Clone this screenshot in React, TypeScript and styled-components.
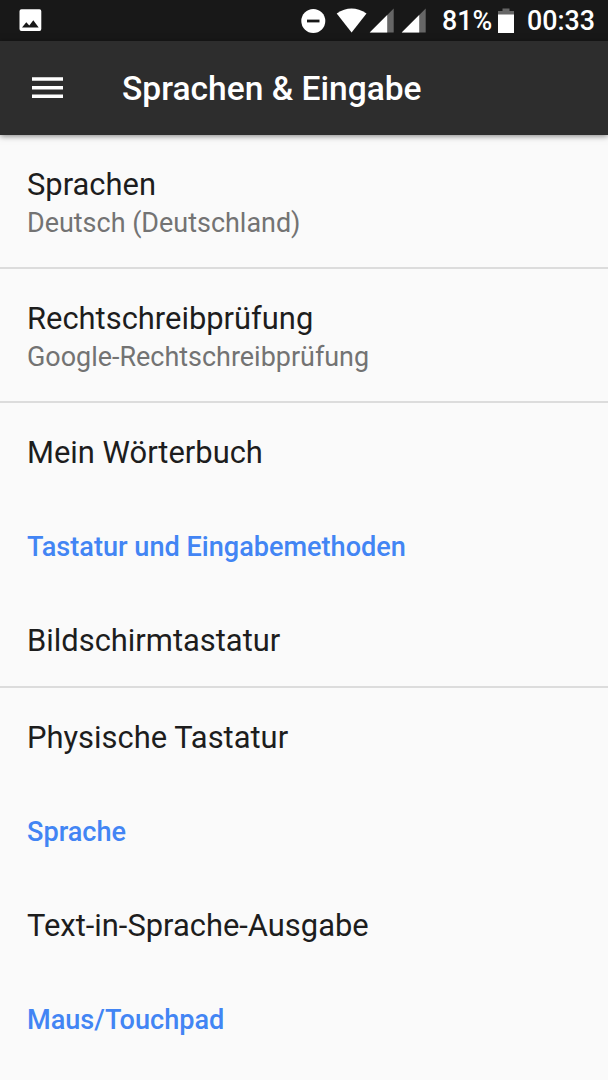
import React from 'react';
import styled, { createGlobalStyle } from 'styled-components';

const Global = createGlobalStyle`
  * { box-sizing: border-box; }
  body { margin: 0; background: #fafafa; font-family: Roboto, sans-serif; overflow: hidden; }
`;
const Screen = styled.div`
  display: flex; flex-direction: column; width: 608px; height: 1080px; overflow: hidden; background: #fafafa;
`;
const StatusBar = styled.div`
  display: flex; align-items: center; height: 41px; flex: none; background: #181818; color: #fff;
  font-size: 26.8px; font-weight: 500; line-height: 41px; padding: 0 13px 0 19px;
  svg { display: block; flex: none; }
`;
const Spacer = styled.div`flex: 1;`;
const Percent = styled.span`width: 49px; margin: 1px 7px 0 15px; white-space: nowrap;`;
const Clock = styled.span`width: 68px; margin: 1px 0 0 13px; white-space: nowrap;`;
const AppBar = styled.header`
  display: flex; align-items: center; height: 94px; flex: none; background: #2d2d2d; padding-left: 32px;
  box-shadow: 0 1px 6px rgba(0,0,0,.5); color: #fff; z-index: 1;
  svg { display: block; }
`;
const Title = styled.h1`
  margin: 2px 0 0 59px; font-size: 33.55px; font-weight: 500; line-height: 40px; white-space: nowrap;
`;
const List = styled.main`display: flex; flex-direction: column;`;
const Row = styled.div<{ $h: number; $line?: boolean; $top: number }>`
  flex: none; height: ${p => p.$h}px; padding: ${p => p.$top}px 27px 0; white-space: nowrap;
  border-bottom: ${p => (p.$line ? '2px solid #dcdcdc' : '0')};
`;
const Name = styled.div`font-size: 30.9px; line-height: 40px; color: #1d1d1d;`;
const Detail = styled.div`font-size: 26.95px; line-height: 36px; color: #737373;`;
const Heading = styled.h2`
  flex: none; margin: 0; height: 94px; padding: 28px 27px 0; font-size: 27.1px; font-weight: 500;
  line-height: 40px; color: #4285f4; white-space: nowrap;
`;

export default function App() {
  return (
    <Screen>
      <Global />
      <StatusBar>
        <svg width="23" height="23" viewBox="0 0 23 23"><path fillRule="evenodd" fill="#fff" d="M2.5 .2H20.500Q22.300 .2 22.300 2.200V20Q22.300 22 20.500 22H2.500Q.5 22 .5 20V2.200Q.5 .2 2.500 .2ZM3 18.500H19.700L14.300 11.300L10.300 16.500L7.300 13.200Z" /></svg>
        <Spacer />
        <svg width="126" height="26" viewBox="0 0 126 26">
          <circle cx="12.3" cy="13" r="12" fill="#fff" /><path d="M6 13H18.500" stroke="#181818" strokeWidth="2.8" />
          <path d="M35.700 5.500Q50.500 -4.500 65.500 5.500L50.600 24.500Z" fill="#fff" />
          <path d="M92.700 .5V24.500H68.700Z M124.700 .5V24.500H100.700Z" fill="#666" />
          <path d="M86.200 7V24.500H68.700Z M118.200 7V24.500H100.700Z" fill="#fff" />
        </svg>
        <Percent>81%</Percent>
        <svg width="16" height="26" viewBox="0 0 16 26"><path d="M4.500 0.500H11.500V3H16V25H0V3H4.500Z" fill="#666" /><path d="M0 6.500H16V25H0Z" fill="#fff" /></svg>
        <Clock>00:33</Clock>
      </StatusBar>
      <AppBar>
        <svg width="31" height="22" viewBox="0 0 31 22"><path d="M0 2H31M0 10.700H31M0 19.300H31" stroke="#fff" strokeWidth="3.4" /></svg>
        <Title>Sprachen &amp; Eingabe</Title>
      </AppBar>
      <List>
        <Row $h={134} $top={30} $line><Name>Sprachen</Name><Detail>Deutsch (Deutschland)</Detail></Row>
        <Row $h={134} $top={30} $line><Name>Rechtschreibprüfung</Name><Detail>Google-Rechtschreibprüfung</Detail></Row>
        <Row $h={96} $top={30}><Name>Mein Wörterbuch</Name></Row>
        <Heading>Tastatur und Eingabemethoden</Heading>
        <Row $h={95} $top={28} $line><Name>Bildschirmtastatur</Name></Row>
        <Row $h={96} $top={30}><Name>Physische Tastatur</Name></Row>
        <Heading>Sprache</Heading>
        <Row $h={94} $top={28}><Name>Text-in-Sprache-Ausgabe</Name></Row>
        <Heading>Maus/Touchpad</Heading>
      </List>
    </Screen>
  );
}
